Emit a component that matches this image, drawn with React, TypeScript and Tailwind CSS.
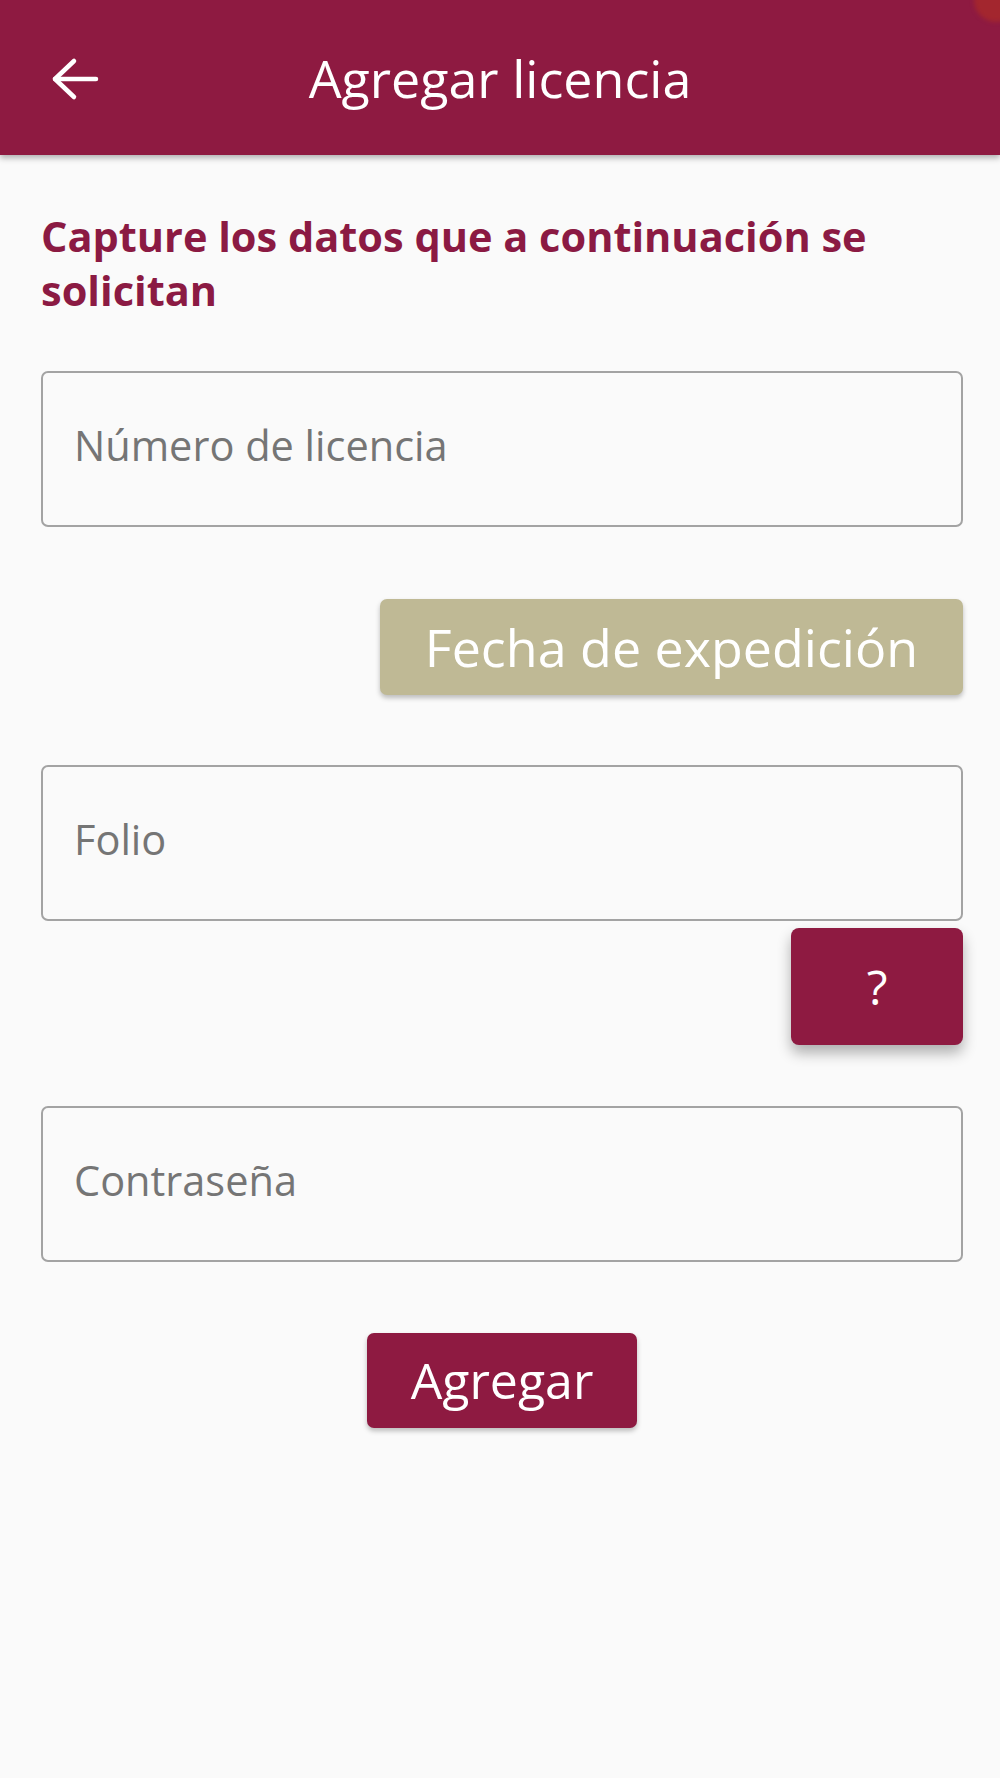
function BackArrow() {
    return (
        <svg width="48" height="44" viewBox="0 0 48 44" fill="none" stroke="white" strokeWidth="4.5" strokeLinecap="round" strokeLinejoin="round">
            <path d="M4 22H45" />
            <path d="M23 4L4 22L23 40" />
        </svg>
    );
}

function Field({ label }: { label: string }) {
    return (
        <div className="h-[156px] w-full rounded-[7px] border-2 border-[#a3a3a3] bg-[#fafafa] pl-[31px] pb-[8px] flex items-center">
            <span className="text-[41.5px] text-[#757575]">{label}</span>
        </div>
    );
}

export default function App() {
    return (
        <div className="relative min-h-[1778px] w-[1000px] overflow-hidden bg-[#fafafa]" style={{ fontFamily: '"Open Sans", "Noto Sans", sans-serif' }}>
            <div className="absolute -right-[18px] -top-[22px] z-20 h-[44px] w-[44px] rounded-full bg-[#a3262e] blur-[2px]" />

            <header className="relative z-10 grid h-[155px] grid-cols-[1fr_auto_1fr] items-center bg-[#8e1a41] shadow-[0_3px_6px_rgba(0,0,0,0.3)]">
                <div className="pl-[51px] pt-[2px]">
                    <BackArrow />
                </div>
                <h1 className="text-[52px] font-normal text-white">Agregar licencia</h1>
                <div />
            </header>

            <main className="pl-[41px] pr-[37px]">
                <p className="mt-[54px] text-[41.5px] font-bold leading-[54px] text-[#8b1a43]">
                    Capture los datos que a continuación se solicitan
                </p>

                <div className="mt-[54px]">
                    <Field label="Número de licencia" />
                </div>

                <div className="mt-[72px] flex justify-end">
                    <button className="flex h-[96px] w-[583px] items-center justify-center rounded-[7px] bg-[#bfb995] text-[52px] text-white shadow-[0_3px_5px_rgba(0,0,0,0.25)]">
                        Fecha de expedición
                    </button>
                </div>

                <div className="mt-[70px]">
                    <Field label="Folio" />
                </div>

                <div className="mt-[7px] flex justify-end">
                    <button className="flex h-[117px] w-[172px] items-center justify-center rounded-[8px] bg-[#8e1a41] text-[48px] font-medium text-white shadow-[0_8px_14px_rgba(0,0,0,0.3)]">
                        ?
                    </button>
                </div>

                <div className="mt-[61px]">
                    <Field label="Contraseña" />
                </div>

                <div className="mt-[71px] flex justify-center">
                    <button className="flex h-[95px] w-[270px] items-center justify-center rounded-[7px] bg-[#8e1a41] text-[50px] text-white shadow-[0_3px_5px_rgba(0,0,0,0.25)]">
                        Agregar
                    </button>
                </div>
            </main>
        </div>
    );
}
